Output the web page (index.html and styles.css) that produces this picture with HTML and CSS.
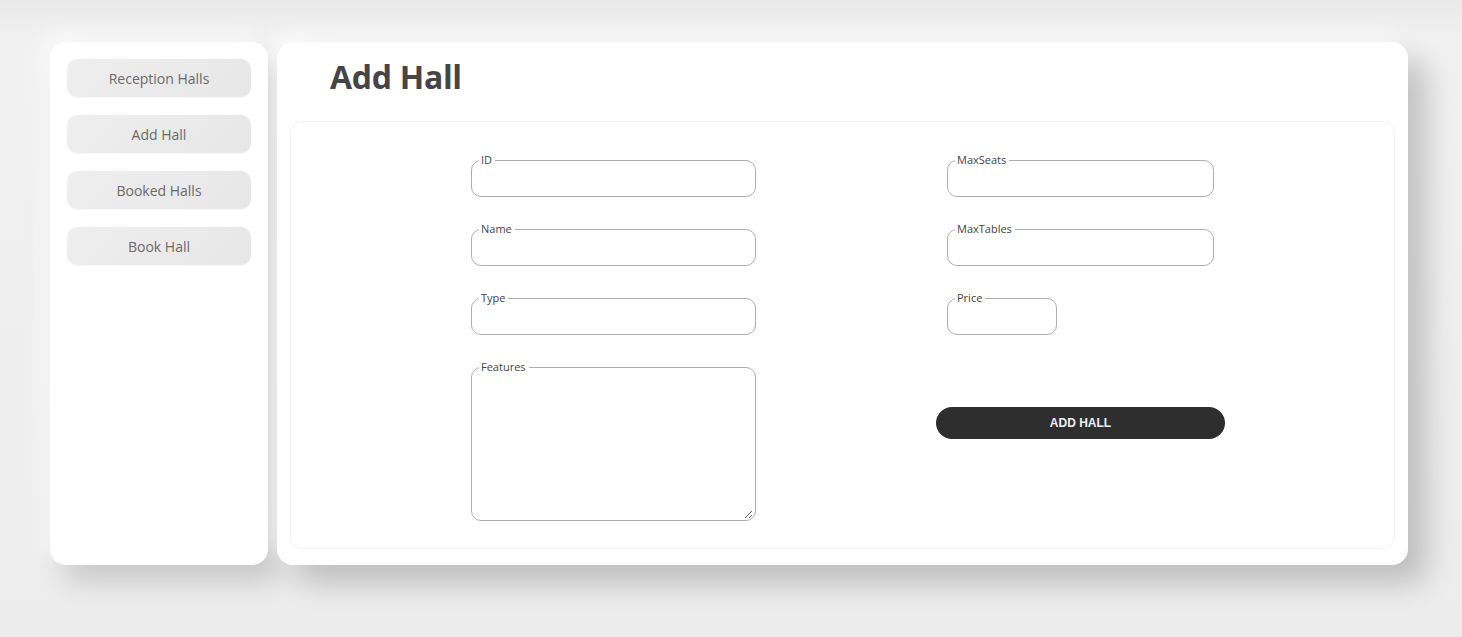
FILE: index.html
```html
<!DOCTYPE html>
<html lang="en">
<head>
<meta charset="utf-8">
<title>Add Hall</title>
<link rel="stylesheet" href="styles.css">
</head>
<body>
<div class="app">
  <aside class="sidebar">
    <button class="nav-btn">Reception Halls</button>
    <button class="nav-btn">Add Hall</button>
    <button class="nav-btn">Booked Halls</button>
    <button class="nav-btn">Book Hall</button>
  </aside>
  <main class="main">
    <header class="header"><h1 class="title">Add Hall</h1></header>
    <form class="form-box">
      <div class="col col-left">
        <fieldset class="field"><legend>ID</legend><input class="input" type="text"></fieldset>
        <fieldset class="field"><legend>Name</legend><input class="input" type="text"></fieldset>
        <fieldset class="field"><legend>Type</legend><input class="input" type="text"></fieldset>
        <fieldset class="field field-area"><legend>Features</legend><textarea class="textarea"></textarea></fieldset>
      </div>
      <div class="col col-right">
        <fieldset class="field"><legend>MaxSeats</legend><input class="input" type="text"></fieldset>
        <fieldset class="field"><legend>MaxTables</legend><input class="input" type="text"></fieldset>
        <fieldset class="field field-small"><legend>Price</legend><input class="input" type="text"></fieldset>
        <button class="submit" type="button">ADD HALL</button>
      </div>
    </form>
  </main>
</div>
</body>
</html>
```

FILE: styles.css
```css
* { box-sizing: border-box; }
html, body { margin: 0; height: 100%; }
body {
  background: linear-gradient(180deg, #e9e9e9 0px, #f1f1f1 40px, #ececec 100%);
  font-family: "Open Sans", "Noto Sans", sans-serif;
  color: #444;
}
.app {
  display: flex;
  gap: 9px;
  padding: 42px 54px 0 50px;
  height: 565px;
}
.sidebar {
  width: 218px;
  background: #fff;
  border-radius: 16px;
  padding: 17px;
  display: flex;
  flex-direction: column;
  gap: 18px;
  box-shadow: 14px 16px 28px rgba(0,0,0,0.16), -8px -8px 20px rgba(255,255,255,0.7);
}
.nav-btn {
  height: 38px;
  border: none;
  border-radius: 10px;
  background: linear-gradient(135deg, #eeeeee, #e7e7e7);
  box-shadow: 0 1px 2px rgba(0,0,0,0.04);
  font-family: "Open Sans", "Noto Sans", sans-serif;
  font-size: 14px;
  color: #6a6a6a;
  cursor: pointer;
}
.main {
  flex: 1;
  background: #fff;
  border-radius: 16px;
  padding: 0 13px 16px;
  display: flex;
  flex-direction: column;
  box-shadow: 18px 18px 30px rgba(0,0,0,0.2), -8px -8px 20px rgba(255,255,255,0.7);
}
.header {
  padding: 15px 0 0 40px;
  height: 79px;
}
.title {
  margin: 0;
  font-size: 32px;
  line-height: 40px;
  font-weight: 700;
  color: #454545;
  letter-spacing: -0.3px;
}
.form-box {
  flex: 1;
  border: 1px solid #f2f2f2;
  border-radius: 12px;
  padding: 32px 0 0 180px;
  display: flex;
  gap: 191px;
}
.col {
  display: flex;
  flex-direction: column;
  gap: 26px;
}
.col-left { width: 285px; }
.col-right { width: 267px; }
.field {
  margin: 0;
  padding: 0 2px 1px 7px;
  border: 1px solid #adadad;
  border-radius: 10px;
  min-width: 0;
}
.field legend {
  font-size: 11px;
  line-height: 12px;
  padding: 0 3px 0 2px;
  color: #444;
}
.input {
  display: block;
  width: 100%;
  height: 29px;
  border: none;
  outline: none;
  background: transparent;
  font-family: inherit;
  font-size: 13px;
}
.field-small { width: 110px; }
.textarea {
  display: block;
  width: 100%;
  height: 146px;
  border: none;
  outline: none;
  background: transparent;
  font-family: inherit;
  font-size: 13px;
  resize: both;
}
.submit {
  margin: 46px -11px 0;
  height: 32px;
  border: none;
  border-radius: 16px;
  background: #2e2e2e;
  color: #f0f0f0;
  font-family: "Liberation Sans", Arial, sans-serif;
  font-weight: 700;
  font-size: 12px;
  cursor: pointer;
}
```
